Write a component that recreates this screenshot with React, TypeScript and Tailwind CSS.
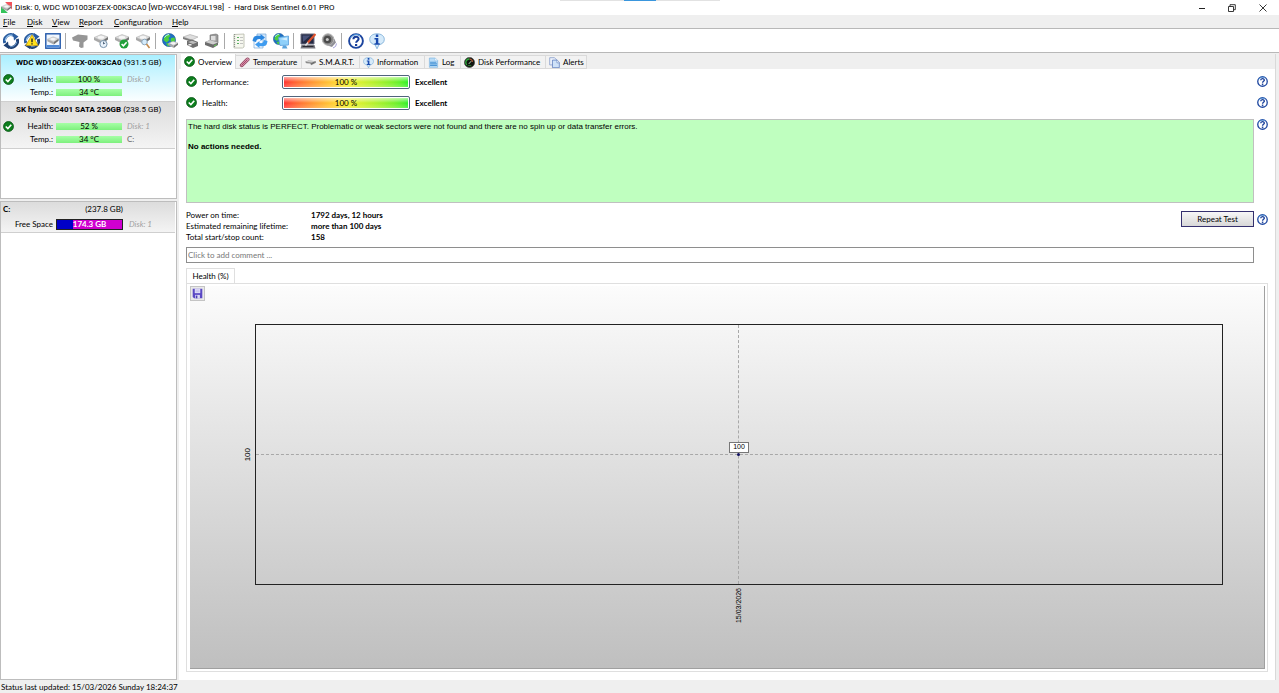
import type { ReactNode } from "react";
import { clsx } from "clsx";

interface IconProps {
  className?: string;
}

function Svg({ className, children }: { className?: string; children: ReactNode }) {
  return (
    <svg viewBox="0 0 16 16" className={clsx("shrink-0", className)} aria-hidden="true">
      {children}
    </svg>
  );
}

function Drive() {
  return (
    <>
      <path d="M1 5.5 8 2.5l7 2.5-6 4z" fill="#dcdcdc" stroke="#aaa" strokeWidth=".5" />
      <path d="M1 5.5 9 9v3L1 8z" fill="#a8a8a8" />
      <path d="M9 9l6-4v2.5L9 12z" fill="#727272" />
      <ellipse cx="8" cy="5.4" rx="3.2" ry="1.3" fill="#f6f6f6" />
    </>
  );
}

function AppIcon({ className }: IconProps) {
  return (
    <Svg className={className}>
      <path d="M6 0h10v11z" fill="#f2545c" />
      <path d="M0 6v10h10z" fill="#35c45a" />
      <g transform="translate(0 1)">
        <Drive />
      </g>
    </Svg>
  );
}

function RefreshArrows() {
  return (
    <>
      <path d="M1.8 10A6.3 6.3 0 0 1 11.5 2.9" fill="none" stroke="#2a5c9f" strokeWidth="3" />
      <path d="M14.2 6A6.3 6.3 0 0 1 4.5 13.1" fill="none" stroke="#1f4175" strokeWidth="3" />
      <path d="M2.2 8A5.9 5.9 0 0 1 9.5 2.3" fill="none" stroke="#9cc6ec" strokeWidth="1.2" />
      <path d="M13.8 8.5A5.9 5.9 0 0 1 7 13.7" fill="none" stroke="#6c9bcd" strokeWidth="1" />
      <path d="M10 0 15.5 3.4 11 7.5z" fill="#2a5c9f" />
      <path d="M6 16 .5 12.6 5 8.5z" fill="#1f4175" />
    </>
  );
}

function RefreshIcon({ className }: IconProps) {
  return (
    <Svg className={className}>
      <RefreshArrows />
    </Svg>
  );
}

function RefreshAlertIcon({ className }: IconProps) {
  return (
    <Svg className={className}>
      <RefreshArrows />
      <path d="M8 1.8 14.2 12.6H1.8z" fill="#ffe21c" stroke="#c79a08" strokeWidth=".7" />
      <path d="M8 5.5v3.7M8 10.2v1.4" stroke="#222" strokeWidth="1.4" />
    </Svg>
  );
}

function DriveWindowIcon({ className }: IconProps) {
  return (
    <Svg className={className}>
      <rect x=".8" y=".8" width="14.4" height="14.4" fill="#f1f7fe" stroke="#1f55a8" strokeWidth="1.4" />
      <path d="M1.5 12h13v2.5h-13z" fill="#4f8ad8" />
      <g transform="translate(1.6 1.8) scale(.8)">
        <Drive />
      </g>
    </Svg>
  );
}

function DriveGreyIcon({ className }: IconProps) {
  return (
    <Svg className={className}>
      <path d="M0 4.5 6 1.5l9.5 1v4l-4 3v5l-2.5.5-2-1.5L7.5 9 1 7.5z" fill="#969696" />
    </Svg>
  );
}

function DriveBase({ className, children }: { className?: string; children?: ReactNode }) {
  return (
    <Svg className={className}>
      <g transform="translate(0 -1)">
        <Drive />
      </g>
      {children}
    </Svg>
  );
}

function DriveClockIcon({ className }: IconProps) {
  return (
    <DriveBase className={className}>
      <circle cx="10.5" cy="11" r="3.6" fill="#e9f2fb" stroke="#7894ad" />
      <path d="M10.5 11V8.7M10.5 11l1.7-1" stroke="#37516b" strokeWidth=".8" />
    </DriveBase>
  );
}

function DriveCheckIcon({ className }: IconProps) {
  return (
    <DriveBase className={className}>
      <circle cx="10" cy="11" r="4.5" fill="#20a03a" />
      <path d="m7.6 11 1.8 1.8 3.2-3.6" fill="none" stroke="#fff" strokeWidth="1.5" />
    </DriveBase>
  );
}

function DriveSearchIcon({ className }: IconProps) {
  return (
    <DriveBase className={className}>
      <circle cx="9.5" cy="9" r="2.8" fill="#d5ebfb" stroke="#8da7bb" />
      <path d="m11.5 11 3 4" stroke="#c58a4b" strokeWidth="1.6" />
    </DriveBase>
  );
}

function Globe() {
  return (
    <>
      <circle cx="7" cy="7" r="6.6" fill="#1f6fc6" stroke="#114c87" strokeWidth=".5" />
      <path d="M3 2.5 7 1l1.5 2-2 2 1 2-3 2.5-3-2.5zM9 5l3.5-.5.7 3L11 10.5 8.5 8zM4 10.5l3-.5 1 2-2 1.5z" fill="#4ccf3e" />
      <path d="M2.5 4.5a5.5 5.5 0 0 1 4.5-3" fill="none" stroke="#c7efff" strokeWidth="1" />
    </>
  );
}

function GlobeDriveIcon({ className }: IconProps) {
  return (
    <Svg className={className}>
      <Globe />
      <g transform="translate(5.5 6.5) scale(.7)">
        <Drive />
      </g>
    </Svg>
  );
}

function DriveStackIcon({ className }: IconProps) {
  return (
    <Svg className={className}>
      <path d="m0 4 7-2.5L15 4 9 7z" fill="#dedede" stroke="#999" strokeWidth=".5" />
      <path d="m0 4 9 3v2L0 6z" fill="#7d7d7d" />
      <path d="M4 8 9 6.5l6 2.5v4l-5 2-6-3z" fill="#6f6f6f" />
      <path d="m5 9 4-1.3L14 9.5l-4 1.5z" fill="#bdbdbd" />
      <path d="M5.5 11h3v1.5h-3z" fill="#eee" />
    </Svg>
  );
}

function PrinterDriveIcon({ className }: IconProps) {
  return (
    <Svg className={className}>
      <path d="M6 2 12 1l2 1v8l-2 2H6z" fill="#9a9a9a" stroke="#6d6d6d" strokeWidth=".6" />
      <path d="M7 3h4.5v4.5H7z" fill="#dedede" />
      <path d="m1 9 5-2 8 2.5V12l-5 3L1 12z" fill="#6c6c6c" />
      <path d="m1 9 5-2 8 2.5L9 11.5z" fill="#cfcfcf" />
      <path d="m10 13 2.5-1.3" stroke="#61d352" />
    </Svg>
  );
}

function ReportIcon({ className }: IconProps) {
  return (
    <Svg className={className}>
      <path d="M3 1.5 13 1v13l-1.5 1H3z" fill="#f6f7ef" stroke="#b5b8a8" strokeWidth=".8" />
      <path d="M3.5 1v14" stroke="#8c968c" strokeWidth="1.2" strokeDasharray="1 1" />
      <path d="M6 4.5h2M6 7.5h2M6 10.5h2" stroke="#5aaf62" strokeWidth="1.2" />
      <path d="M9 4.5h3M9 7.5h3M9 10.5h3" stroke="#b5b5b5" strokeWidth=".8" />
    </Svg>
  );
}

function SyncPagesIcon({ className }: IconProps) {
  return (
    <Svg className={className}>
      <path d="M5 1h9v11H5z" fill="#cfe5fa" stroke="#77a7d6" strokeWidth=".7" />
      <path d="M2 4h9v11H2z" fill="#f4f9ff" stroke="#77a7d6" strokeWidth=".7" />
      <path d="M.5 8c.5-5 4-6 8-5V1L13 4.5 8.5 8V6C5.5 5.5 4.5 6.5 4 9z" fill="#2b87e0" />
      <path d="M15.500 8c-.5 5-4 6-8 5v2L3 11.5 7.5 8v2c3 .5 4-.5 4.5-3z" fill="#3f9cf0" />
    </Svg>
  );
}

function GlobeMonitorIcon({ className }: IconProps) {
  return (
    <Svg className={className}>
      <g transform="scale(.85)">
        <Globe />
      </g>
      <path d="M5.5 4.5 15.5 3v9L7 12.5z" fill="#8fd0fa" stroke="#5c9fda" strokeWidth=".8" />
      <path d="M7 6 14 4.5v3z" fill="#d3efff" />
      <path d="M10 12.5h3l1.5 3H9z" fill="#5ba3dc" />
    </Svg>
  );
}

function MonitorPenIcon({ className }: IconProps) {
  return (
    <Svg className={className}>
      <path d="M1 1h13v10H1z" fill="#242a44" stroke="#6a6d80" />
      <path d="M2.5 2.5h8L3 9z" fill="#49527a" />
      <path d="M1.5 12h13l1 3.5H.5z" fill="#77777f" />
      <path d="M2.5 13.5h11" stroke="#2b2b33" />
      <path d="m15.5 1-8 9" stroke="#e0522c" strokeWidth="2.2" />
      <path d="m8 9.5-2.5 3" stroke="#e6e6e6" strokeWidth="1.4" />
    </Svg>
  );
}

function SpeakerIcon({ className }: IconProps) {
  return (
    <Svg className={className}>
      <path d="m5 12 7-9 3 6.5-4 4.5z" fill="#8f8f96" />
      <circle cx="7" cy="6.5" r="5.7" fill="#8a8a8a" stroke="#b5b5b5" />
      <circle cx="6.5" cy="6.5" r="3.8" fill="#4b4b4b" />
      <circle cx="6.3" cy="6.5" r="1.5" fill="#c9c9c9" />
      <path d="M12 15q3.5-1 3.5-4.5" fill="none" stroke="#a5a1da" />
    </Svg>
  );
}

function HelpIcon({ className }: IconProps) {
  return (
    <Svg className={className}>
      <circle cx="8" cy="8" r="6.9" fill="#fff" stroke="#1c459f" strokeWidth="1.9" />
      <path d="M2.5 5A6.5 6.5 0 0 1 12 2.7" fill="none" stroke="#5caae8" strokeWidth=".9" />
      <path d="M5.4 6.3c0-3.3 5.2-3.3 5.2-.3 0 1.7-2.5 1.7-2.5 3.8" fill="none" stroke="#173d98" strokeWidth="2" />
      <path d="M7 11h2.2v2H7z" fill="#173d98" />
    </Svg>
  );
}

function InfoIcon({ className }: IconProps) {
  return (
    <Svg className={className}>
      <path d="M8 .8c4.5 0 7.3 2.3 7.3 5.6 0 3-2.3 4.8-5.3 5.3L8 15.8 6 11.7C3 11.2.7 9.4.7 6.4.7 3.1 3.5.8 8 .8z" fill="#d5eafa" stroke="#7fb0d8" strokeWidth=".9" />
      <path d="M6.8 1.6h2.5v2.3H6.8zM5.5 5h3.8v5.2h1.4v1.6H5.5v-1.6h1.4V6.6H5.5z" fill="#1849ad" />
    </Svg>
  );
}

function CheckIcon({ className }: IconProps) {
  return (
    <Svg className={className}>
      <circle cx="8" cy="8" r="7.2" fill="#0d7f1e" stroke="#075313" strokeWidth="1.2" />
      <path d="m4 8 3.1 3 4.9-5.5" fill="none" stroke="#fff" strokeWidth="2.4" />
    </Svg>
  );
}

function ThermometerIcon({ className }: IconProps) {
  return (
    <Svg className={className}>
      <path d="M4 12 12.5 3.5" stroke="#8d3450" strokeWidth="5.5" strokeLinecap="round" />
      <path d="M4 12 12.5 3.5" stroke="#dfb4c8" strokeWidth="3.5" strokeLinecap="round" />
      <path d="m4 12 8-8" stroke="#a52f55" strokeWidth="1.5" strokeLinecap="round" />
    </Svg>
  );
}

function SmartIcon({ className }: IconProps) {
  return (
    <Svg className={className}>
      <path d="m0 7 5-2 11 1v2.5L9 12 7.5 9.5 2 9z" fill="#8a8a8a" />
      <path d="m1 7 5-2 9 1-5 2z" fill="#ccc" />
      <path d="m9 10 5-2.5" stroke="#555" />
    </Svg>
  );
}

function LogIcon({ className }: IconProps) {
  return (
    <Svg className={className}>
      <path d="M2 1.5h8.5L14 5v10H2z" fill="#b9dcf7" stroke="#7db4e0" />
      <path d="M10 1.5v4h4" fill="#fff" stroke="#7db4e0" strokeWidth=".7" />
      <path d="M3 7.5h9M3 10h10M3 12.5h10" stroke="#4b95d6" strokeWidth="1.5" />
    </Svg>
  );
}

function GaugeIcon({ className }: IconProps) {
  return (
    <Svg className={className}>
      <circle cx="8" cy="8" r="7.4" fill="#101610" stroke="#4a4a4a" />
      <path d="M4 11.5A5 5 0 0 1 8 3" fill="none" stroke="#2daa3c" strokeWidth="2" />
      <path d="M8 3a5 5 0 0 1 4.5 4" fill="none" stroke="#b85a36" strokeWidth="1.5" />
      <path d="m7 10 3.5-4" stroke="#d9f5d9" strokeWidth="1.2" />
      <path d="M5.5 12.5h5" stroke="#2daa3c" />
    </Svg>
  );
}

function AlertsIcon({ className }: IconProps) {
  return (
    <Svg className={className}>
      <path d="M1 1h7l3 3v7.5H1z" fill="#eef3fb" stroke="#7690c4" />
      <path d="M5 4.5h7L15 8v7.5H5z" fill="#cfe2f8" stroke="#4d6fb5" />
      <path d="M11.5 4.5v4H15" fill="#fff" stroke="#4d6fb5" strokeWidth=".8" />
    </Svg>
  );
}

function SaveIcon({ className }: IconProps) {
  return (
    <Svg className={className}>
      <path d="M1 1h14v14H3l-2-2z" fill="#5a48c4" />
      <path d="M4 1h8v6.5H4z" fill="#e6e4fa" />
      <path d="M5 3h6M5 5.5h6" stroke="#9d97dc" strokeWidth=".8" />
      <path d="M4.5 10h7v5h-7z" fill="#dcdaf5" />
      <path d="M5.5 11h2.3v4H5.5z" fill="#4a3cb4" />
    </Svg>
  );
}

const menus = [
  { label: "File", width: "w-[24px]" },
  { label: "Disk", width: "w-[25px]" },
  { label: "View", width: "w-[27px]" },
  { label: "Report", width: "w-[35px]" },
  { label: "Configuration", width: "w-[58px]" },
  { label: "Help", width: "w-[26px]" },
];

const toolbar = [
  [
    { label: "Refresh", Icon: RefreshIcon },
    { label: "Refresh with warnings", Icon: RefreshAlertIcon },
    { label: "Disk window", Icon: DriveWindowIcon },
  ],
  [
    { label: "Disk", Icon: DriveGreyIcon },
    { label: "Short self test", Icon: DriveClockIcon },
    { label: "Extended self test", Icon: DriveCheckIcon },
    { label: "Surface test", Icon: DriveSearchIcon },
  ],
  [
    { label: "Online disk information", Icon: GlobeDriveIcon },
    { label: "Disk stack", Icon: DriveStackIcon },
    { label: "Hardware", Icon: PrinterDriveIcon },
  ],
  [
    { label: "Report", Icon: ReportIcon },
    { label: "Send report", Icon: SyncPagesIcon },
    { label: "Remote monitoring", Icon: GlobeMonitorIcon },
  ],
  [
    { label: "Configuration", Icon: MonitorPenIcon },
    { label: "Sound", Icon: SpeakerIcon },
  ],
  [
    { label: "Help", Icon: HelpIcon },
    { label: "About", Icon: InfoIcon },
  ],
];

const disks = [
  { name: "WDC WD1003FZEX-00K3CA0", size: "(931.5 GB)", health: "100 %", temp: "34 °C", disk: "Disk: 0", drive: "", selected: true },
  { name: "SK hynix SC401 SATA 256GB", size: "(238.5 GB)", health: "52 %", temp: "34 °C", disk: "Disk: 1", drive: "C:", selected: false },
];

const tabs = [
  { label: "Overview", Icon: CheckIcon, width: "w-[55px]" },
  { label: "Temperature", Icon: ThermometerIcon, width: "w-[66px]" },
  { label: "S.M.A.R.T.", Icon: SmartIcon, width: "w-[58px]" },
  { label: "Information", Icon: InfoIcon, width: "w-[65px]" },
  { label: "Log", Icon: LogIcon, width: "w-[36px]" },
  { label: "Disk Performance", Icon: GaugeIcon, width: "w-[85px]" },
  { label: "Alerts", Icon: AlertsIcon, width: "w-[41px]" },
];

const scores = [
  { label: "Performance:", value: "100 %", rating: "Excellent" },
  { label: "Health:", value: "100 %", rating: "Excellent" },
];

const stats = [
  { label: "Power on time:", value: "1792 days, 12 hours" },
  { label: "Estimated remaining lifetime:", value: "more than 100 days" },
  { label: "Total start/stop count:", value: "158" },
];

function TitleBar() {
  return (
    <header className="relative flex h-[15px] shrink-0 items-center bg-white pl-px">
      <AppIcon className="size-[11px]" />
      <h1 className="ml-[3px] font-[Roboto,sans-serif] whitespace-pre">
        {"Disk: 0, WDC WD1003FZEX-00K3CA0 [WD-WCC6Y4FJL198]  -  Hard Disk Sentinel 6.01 PRO"}
      </h1>
      <div className="absolute top-0 left-1/2 flex h-px w-40 -translate-x-1/2 justify-center bg-[#e2e2e2]">
        <span className="h-px w-8 bg-[#3a96dd]" />
      </div>
      <div className="ml-auto flex">
        <button aria-label="Minimize" className="flex h-[14px] w-[30px] items-center justify-center">
          <svg viewBox="0 0 8 8" className="size-2"><path d="M1 4.5h6" stroke="#222" /></svg>
        </button>
        <button aria-label="Restore" className="flex h-[14px] w-[30px] items-center justify-center">
          <svg viewBox="0 0 8 8" className="size-2" fill="none" stroke="#222" strokeWidth=".9">
            <path d="M.5 2.5h5v5h-5zM2 2.5V.7h5.3v5H5.5" />
          </svg>
        </button>
        <button aria-label="Close" className="flex h-[14px] w-[32px] items-center justify-center">
          <svg viewBox="0 0 8 8" className="size-2"><path d="m.5.5 7 7m0-7-7 7" stroke="#222" strokeWidth=".9" /></svg>
        </button>
      </div>
    </header>
  );
}

function MenuBar() {
  return (
    <nav className="flex h-[14px] shrink-0 items-center border-b border-[#b8b8b8] bg-[#efefef] pl-[3px]">
      {menus.map(({ label, width }) => (
        <button key={label} className={clsx("text-left whitespace-nowrap", width)}>
          <span className="underline">{label[0]}</span>
          {label.slice(1)}
        </button>
      ))}
    </nav>
  );
}

function Toolbar() {
  return (
    <div className="flex h-[24px] shrink-0 items-center border-b border-[#b8b8b8] bg-white">
      {toolbar.map((group, i) => (
        <div key={i} className="flex items-center">
          {i > 0 && <span className="mr-[3px] ml-[2px] h-4 w-px bg-[#a9a9a9]" />}
          {group.map(({ label, Icon }) => (
            <button key={label} aria-label={label} className="flex w-[21px] justify-center">
              <Icon className="size-4" />
            </button>
          ))}
        </div>
      ))}
    </div>
  );
}

function GreenBar({ value }: { value: string }) {
  return (
    <span className="ml-[2px] flex h-[7px] items-center justify-center bg-linear-to-b from-[#a6ffa6] to-[#7df07d]">
      {value}
    </span>
  );
}

function DiskCard({ disk }: { disk: (typeof disks)[number] }) {
  return (
    <button
      className={clsx(
        "flex h-[47px] w-full flex-col border-b border-[#cfcfcf] pt-[2px] text-left",
        disk.selected ? "bg-linear-to-b from-[#a9efff] to-[#fbfeff]" : "bg-linear-to-b from-[#dcdcdc] to-[#f4f4f4]"
      )}
    >
      <span className="block pl-[15px] font-[Roboto,sans-serif] leading-[11px] whitespace-nowrap">
        <b>{disk.name}</b> {disk.size}
      </span>
      <span className="mt-[5px] grid w-full grid-cols-[14px_37px_68px_1fr] items-center gap-x-px leading-[13px]">
        <CheckIcon className="row-start-1 ml-[2px] size-[11px]" />
        <span className="text-right">Health:</span>
        <GreenBar value={disk.health} />
        <i className="pl-1 text-[#a0a0a0]">{disk.disk}</i>
        <span className="col-start-2 text-right">Temp.:</span>
        <GreenBar value={disk.temp} />
        <span className="pl-1 text-[#666]">{disk.drive}</span>
      </span>
    </button>
  );
}

function Sidebar() {
  return (
    <aside className="flex w-[177px] shrink-0 flex-col gap-[2px]">
      <div className="h-[145px] shrink-0 border border-[#bdbdbd] bg-white pr-px">
        {disks.map((disk) => (
          <DiskCard key={disk.name} disk={disk} />
        ))}
      </div>
      <div className="flex-1 border border-[#bdbdbd] bg-white pr-px">
        <button className="block w-full border-b border-[#cfcfcf] bg-linear-to-b from-[#dcdcdc] to-[#f4f4f4] pt-px pb-px text-left">
          <span className="flex w-[122px] justify-between pl-[2px] leading-[13px]">
            <b>C:</b>
            <span>(237.8 GB)</span>
          </span>
          <span className="mt-[2px] flex items-center leading-[13px]">
            <span className="w-[52px] text-right">Free Space</span>
            <b className="ml-[3px] flex h-[11px] w-[67px] items-center justify-center border border-[#222] bg-linear-to-r from-[#0000c8] from-25% to-[#d000d0] to-25% text-white">
              174.3 GB
            </b>
            <i className="ml-[6px] text-[#a0a0a0]">Disk: 1</i>
          </span>
        </button>
      </div>
    </aside>
  );
}

function TabBar() {
  return (
    <div role="tablist" className="flex h-[15px] shrink-0 items-end bg-[#efefef] pl-[2px]">
      {tabs.map(({ label, Icon, width }, i) => (
        <button
          key={label}
          role="tab"
          aria-selected={i === 0}
          className={clsx(
            "flex items-center gap-[3px] border-r border-[#dadada] pl-[3px] whitespace-nowrap",
            i === 0 ? "h-[15px] bg-white" : "h-[14px] border-t border-b bg-[#f2f2f2]",
            width
          )}
        >
          <Icon className="size-[11px]" />
          {label}
        </button>
      ))}
    </div>
  );
}

function HelpButton() {
  return (
    <button aria-label="Help" className="shrink-0">
      <HelpIcon className="size-[11px]" />
    </button>
  );
}

function ScoreRow({ score }: { score: (typeof scores)[number] }) {
  return (
    <div className="flex h-[21px] items-center">
      <CheckIcon className="size-[11px]" />
      <span className="ml-[5px] w-[80px]">{score.label}</span>
      <div className="h-[14px] w-[128px] rounded-[2px] border border-[#50647c] bg-white p-px">
        <div className="h-full bg-linear-to-r from-[#ff3030] via-[#f6ee30] to-[#28f028]">
          <div className="flex size-full items-center justify-center bg-linear-to-b from-white/60 via-transparent to-white/20">
            {score.value}
          </div>
        </div>
      </div>
      <b className="ml-[5px] flex-1">{score.rating}</b>
      <HelpButton />
    </div>
  );
}

function HealthChart() {
  return (
    <div className="flex min-h-0 flex-1 flex-col border border-[#dfdfdf] p-[2px] pl-[3px]">
      <div className="flex flex-1 flex-col border-r border-b border-[#a0a0a0] bg-linear-to-b from-[#fcfcfc] to-[#bfbfbf]">
        <button aria-label="Save chart" className="flex size-[15px] items-center justify-center border border-[#c4c4c4] bg-[#e9e9e9]">
          <SaveIcon className="size-[11px]" />
        </button>
        <div className="mt-[23px] flex flex-1 font-['Liberation_Sans',sans-serif]">
          <div className="flex w-[65px] items-center justify-end pr-[2px]">
            <span className="rotate-180 [writing-mode:vertical-rl]">100</span>
          </div>
          <div className="relative mr-[41px] flex-1 border border-[#222]">
            <span className="absolute inset-y-0 left-1/2 -translate-x-px border-l border-dashed border-[#a8a8a8]" />
            <span className="absolute inset-x-0 top-1/2 -translate-y-px border-t border-dashed border-[#a8a8a8]" />
            <span className="absolute top-1/2 left-1/2 size-[3px] -translate-x-[2px] -translate-y-[2px] rounded-full bg-[#101060]" />
            <span className="absolute right-1/2 bottom-1/2 mr-[-10px] mb-[2px] flex h-[11px] w-[20px] items-center justify-center border border-[#777] bg-white text-[7px]">
              100
            </span>
          </div>
        </div>
        <div className="mr-[41px] ml-[65px] flex h-[83px] justify-center pt-[3px] font-['Liberation_Sans',sans-serif] text-[7px]">
          <span className="h-fit rotate-180 [writing-mode:vertical-rl]">15/03/2026</span>
        </div>
      </div>
    </div>
  );
}

function Overview() {
  return (
    <section className="flex flex-1 flex-col bg-white pt-[2px] pr-[7px] pb-[8px] pl-[7px]">
      {scores.map((score) => (
        <ScoreRow key={score.label} score={score} />
      ))}
      <div className="mt-[6px] flex items-start gap-[3px]">
        <div className="h-[84px] flex-1 border border-[#c0c0c0] bg-[#bfffbf] px-px py-[2px] font-['Liberation_Sans',sans-serif] leading-[10px]">
          <p>
            The hard disk status is PERFECT. Problematic or weak sectors were not found and there are no spin up or data
            transfer errors.
          </p>
          <p className="mt-[10px] font-bold">No actions needed.</p>
        </div>
        <HelpButton />
      </div>
      <div className="mt-[7px] flex items-start">
        <dl className="grid flex-1 grid-cols-[125px_1fr] leading-[11px]">
          {stats.map(({ label, value }) => (
            <div key={label} className="contents">
              <dt>{label}</dt>
              <dd className="font-bold">{value}</dd>
            </div>
          ))}
        </dl>
        <div className="mt-px flex items-center gap-[3px]">
          <button className="h-[16px] w-[73px] border border-[#35306e] bg-linear-to-b from-[#f7f7f7] to-[#d8d8d8]">
            Repeat Test
          </button>
          <HelpButton />
        </div>
      </div>
      <input
        aria-label="Comment"
        placeholder="Click to add comment ..."
        className="mt-[4px] mr-[14px] h-[16px] border border-[#8e8e8e] bg-white px-px placeholder:text-[#777]"
      />
      <button className="mt-[5px] h-[15px] w-[49px] border border-b-0 border-[#dfdfdf] bg-white">Health (%)</button>
      <HealthChart />
    </section>
  );
}

export default function App() {
  return (
    <div className="flex h-screen flex-col bg-[#efefef] font-[Lato,'Open_Sans',sans-serif] text-[8px] leading-[10px] text-black">
      <TitleBar />
      <MenuBar />
      <Toolbar />
      <main className="flex min-h-0 flex-1 gap-[2px] pt-px">
        <Sidebar />
        <div className="mr-[3px] flex min-w-0 flex-1 flex-col border-r border-[#d9d9d9]">
          <TabBar />
          <Overview />
        </div>
      </main>
      <footer className="flex h-[13px] shrink-0 items-center pt-px pl-px">Status last updated: 15/03/2026 Sunday 18:24:37</footer>
    </div>
  );
}
